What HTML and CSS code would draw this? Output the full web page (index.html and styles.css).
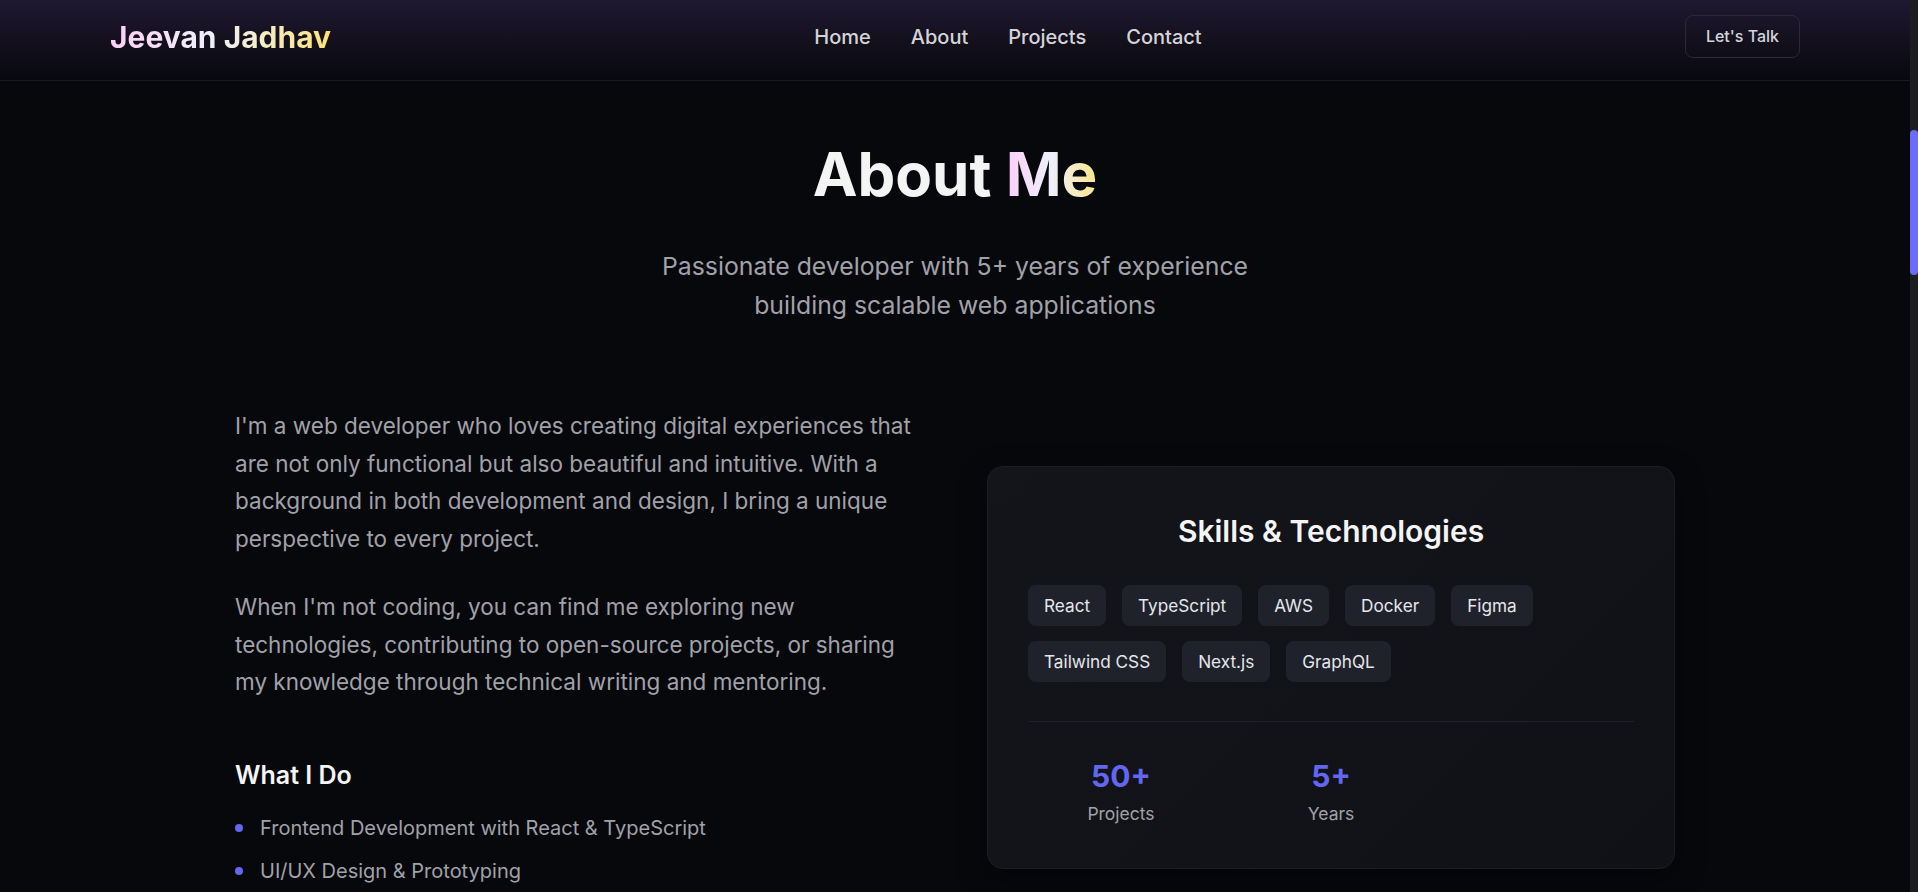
FILE: index.html
```html
<!DOCTYPE html>
<html lang="en">
<head>
<meta charset="utf-8">
<title>Jeevan Jadhav — About</title>
<link rel="stylesheet" href="styles.css">
</head>
<body>
<div class="app">
  <div class="page">
    <header class="header">
      <a class="logo" href="#">Jeevan Jadhav</a>
      <nav class="nav">
        <a href="#">Home</a>
        <a href="#">About</a>
        <a href="#">Projects</a>
        <a href="#">Contact</a>
      </nav>
      <a class="cta" href="#">Let's Talk</a>
    </header>
    <main class="about">
      <h1 class="title">About <span class="grad">Me</span></h1>
      <p class="subtitle">Passionate developer with 5+ years of experience building scalable web applications</p>
      <div class="grid">
        <div class="left">
          <p class="para">I'm a web developer who loves creating digital experiences that are not only functional but also beautiful and intuitive. With a background in both development and design, I bring a unique perspective to every project.</p>
          <p class="para para-last">When I'm not coding, you can find me exploring new technologies, contributing to open-source projects, or sharing my knowledge through technical writing and mentoring.</p>
          <h3 class="sub">What I Do</h3>
          <ul class="list">
            <li class="item"><span class="dot"></span>Frontend Development with React &amp; TypeScript</li>
            <li class="item"><span class="dot"></span>UI/UX Design &amp; Prototyping</li>
            <li class="item"><span class="dot"></span>Backend Development with Node.js</li>
          </ul>
        </div>
        <div class="card">
          <h3 class="card-title">Skills &amp; Technologies</h3>
          <div class="tags">
            <span class="tag">React</span>
            <span class="tag">TypeScript</span>
            <span class="tag">AWS</span>
            <span class="tag">Docker</span>
            <span class="tag">Figma</span>
            <span class="tag">Tailwind CSS</span>
            <span class="tag">Next.js</span>
            <span class="tag">GraphQL</span>
          </div>
          <div class="stats">
            <div class="stat"><div class="num">50+</div><div class="label">Projects</div></div>
            <div class="stat"><div class="num">5+</div><div class="label">Years</div></div>
          </div>
        </div>
      </div>
    </main>
  </div>
  <div class="scrollbar"><div class="thumb"></div></div>
</div>
</body>
</html>
```
FILE: styles.css
```css
html, body {
  margin: 0;
  height: 100%;
  overflow: hidden;
  background: #07080c;
}
body {
  font-family: Inter, "Noto Sans", "Liberation Sans", sans-serif;
  -webkit-font-smoothing: antialiased;
}
.app {
  display: flex;
  height: 892px;
}
.page {
  flex: 1;
  min-width: 0;
  overflow: hidden;
}
.scrollbar {
  width: 8px;
  flex-shrink: 0;
  background: #1c1d22;
}
.thumb {
  margin-top: 130px;
  height: 145px;
  background: #6c6cfb;
  border-radius: 4px;
}

/* header */
.header {
  display: flex;
  justify-content: space-between;
  align-items: center;
  height: 43px;
  padding: 15px 110px 22px;
  border-bottom: 1px solid #191a21;
  background: linear-gradient(180deg, #1f1833 0%, #15111f 45%, #08090d 100%);
}
.logo {
  font-size: 30px;
  line-height: 36px;
  font-weight: 700;
  text-decoration: none;
  background: linear-gradient(90deg, #fbcff6 0%, #eef0fb 45%, #f3eed0 65%, #fde276 100%);
  -webkit-background-clip: text;
  background-clip: text;
  color: transparent;
}
.nav {
  display: flex;
  gap: 40px;
}
.nav a {
  color: #d4d4d8;
  font-size: 20px;
  font-weight: 500;
  text-decoration: none;
}
.cta {
  font-size: 16px;
  line-height: 23px;
  font-weight: 500;
  color: #d4d5dc;
  text-decoration: none;
  border: 1px solid #2a2b33;
  border-radius: 8px;
  padding: 9px 20px;
}

/* about section */
.about {
  padding-top: 63px;
}
.title {
  margin: 0 0 43px;
  text-align: center;
  font-size: 60px;
  line-height: 60px;
  font-weight: 700;
  color: #f4f4f5;
}
.grad {
  background: linear-gradient(90deg, #fbd0f8 0%, #eef0fc 50%, #fde68a 100%);
  -webkit-background-clip: text;
  background-clip: text;
  color: transparent;
}
.subtitle {
  max-width: 672px;
  margin: 0 auto 82px;
  text-align: center;
  font-size: 24.8px;
  line-height: 39px;
  color: #a1a1aa;
}
.grid {
  display: grid;
  grid-template-columns: 1fr 1fr;
  gap: 64px;
  max-width: 1440px;
  margin: 0 auto;
  align-items: center;
}
.para {
  margin: 0 0 31px;
  font-size: 22.5px;
  line-height: 37.5px;
  color: #a1a1aa;
}
.para-last {
  margin-bottom: 58px;
}
.sub {
  margin: 0 0 23px;
  font-size: 25px;
  line-height: 32px;
  font-weight: 600;
  color: #f4f4f5;
}
.list {
  list-style: none;
  margin: 0;
  padding: 0;
  display: flex;
  flex-direction: column;
  gap: 15px;
}
.item {
  display: flex;
  align-items: center;
  gap: 17px;
  font-size: 20px;
  line-height: 28px;
  color: #a1a1aa;
}
.dot {
  width: 8px;
  height: 8px;
  border-radius: 50%;
  background: #6366f1;
  flex-shrink: 0;
}

/* card */
.card {
  padding: 46px 40px 42px;
  border: 1px solid #1c1e25;
  border-radius: 16px;
  background: linear-gradient(135deg, #13151b 0%, #0f1116 100%);
  box-shadow: 0 10px 30px rgba(0, 0, 0, 0.45);
}
.card-title {
  margin: 0 0 36px;
  text-align: center;
  font-size: 30px;
  line-height: 36px;
  font-weight: 600;
  color: #f4f4f5;
}
.tags {
  display: flex;
  flex-wrap: wrap;
  gap: 15px 16px;
}
.tag {
  padding: 8px 16px;
  border-radius: 8px;
  background: #1f222b;
  color: #e5e7eb;
  font-size: 17.2px;
  line-height: 25px;
}
.stats {
  margin-top: 39px;
  padding-top: 36px;
  border-top: 1px solid #1f2129;
  display: grid;
  grid-template-columns: repeat(3, 1fr);
  gap: 24px;
  text-align: center;
}
.num {
  font-size: 30px;
  line-height: 36px;
  font-weight: 700;
  color: #6366f1;
}
.label {
  margin-top: 8px;
  font-size: 17.5px;
  line-height: 24px;
  color: #a1a1aa;
}
```
